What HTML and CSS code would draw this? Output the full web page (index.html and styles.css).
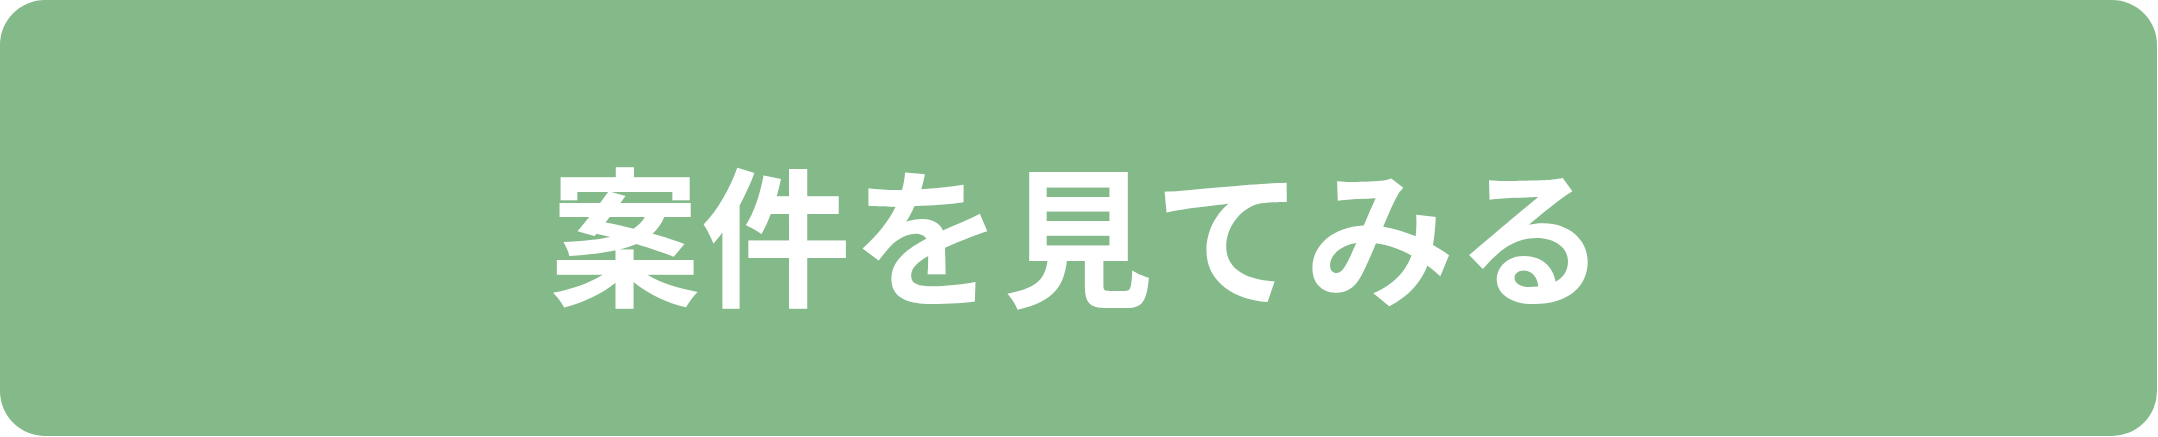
FILE: index.html
```html
<!DOCTYPE html>
<html lang="ja">
<head>
<meta charset="utf-8">
<title>案件を見てみる</title>
<link rel="stylesheet" href="styles.css">
</head>
<body>
<a class="cta" href="#">
  <span class="cta-label">案件を見てみる</span>
</a>
</body>
</html>
```

FILE: styles.css
```css
html, body {
  margin: 0;
  padding: 0;
  background: #ffffff;
}
body {
  width: 2158px;
  height: 437px;
  overflow: hidden;
}
.cta {
  display: flex;
  align-items: center;
  justify-content: center;
  box-sizing: border-box;
  width: 2157px;
  height: 436px;
  padding-top: 24px;
  background: #84b98a;
  border-radius: 45px;
  text-decoration: none;
}
.cta-label {
  color: #ffffff;
  font-family: "Noto Sans CJK JP", "Noto Sans", sans-serif;
  font-weight: 700;
  font-size: 150px;
  line-height: 1;
  letter-spacing: 1px;
}
```
